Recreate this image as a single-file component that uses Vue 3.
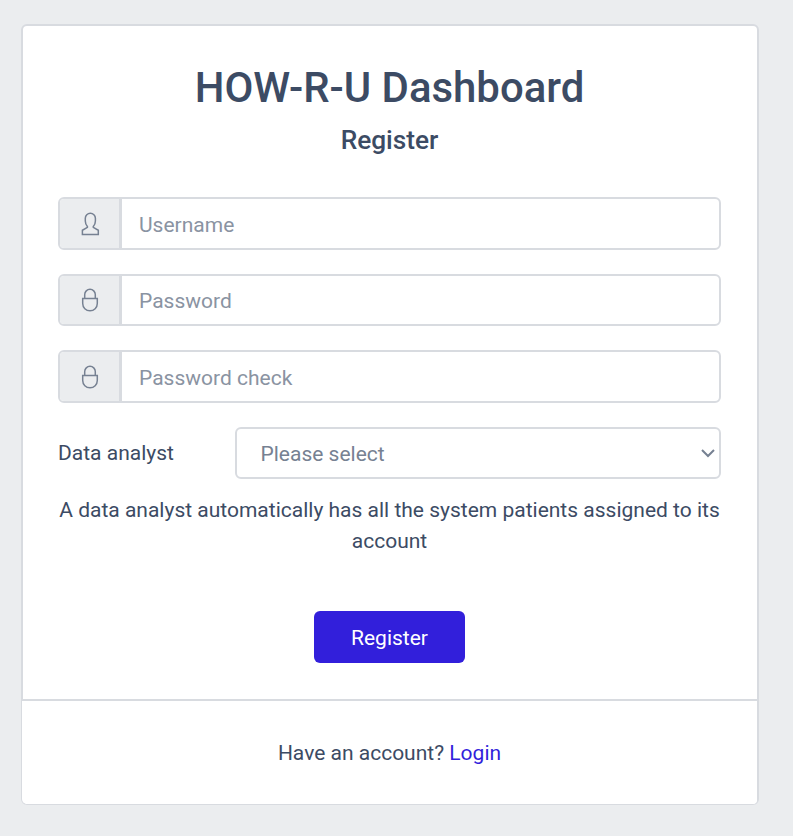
<script setup>
import { ref } from 'vue'

const fields = ref([
  { id: 'username', label: 'Username', type: 'text', icon: 'user', value: '' },
  { id: 'password', label: 'Password', type: 'password', icon: 'lock', value: '' },
  { id: 'password-check', label: 'Password check', type: 'password', icon: 'lock', value: '' },
])
</script>

<template>
  <main class="page">
    <section class="card">
      <form class="card-body" @submit.prevent>
        <h1>HOW-R-U Dashboard</h1>
        <h2>Register</h2>

        <div v-for="field in fields" :key="field.id" class="input-group" :class="field.id">
          <span class="prepend">
            <svg v-if="field.icon === 'user'" class="icon" viewBox="0 0 24 24">
              <path d="M9.400 14.400C8.300 13.200 7.300 11 7.300 9V6.300A5.050 5.050 0 0 1 17.400 6.300V9C17.400 11 16.400 13.200 15.300 14.400V15.400L20.300 18.300V22.500H4.400V18.300L9.400 15.400Z" />
            </svg>
            <svg v-else class="icon" viewBox="0 0 24 24">
              <path d="M6.700 10.500V6.600A5.300 5.300 0 0 1 17.300 6.600V10.500M4.700 10.500H19.300V15.500A7.300 7.300 0 0 1 4.700 15.500Z" />
            </svg>
          </span>
          <input v-model="field.value" :type="field.type" :placeholder="field.label" />
        </div>

        <div class="select-row">
          <label>Data analyst</label>
          <div class="select">
            <span>Please select</span>
            <svg class="chevron" viewBox="0 0 16 10"><path d="M2 2L8 8L14 2" /></svg>
          </div>
        </div>

        <p class="hint">A data analyst automatically has all the system patients assigned to its account</p>
        <button type="submit">Register</button>
      </form>
      <footer>Have an account? <a href="#">Login</a></footer>
    </section>
  </main>
</template>

<style>
body {
  background: #ebedef;
}
</style>

<style scoped>
* {
  box-sizing: border-box;
}
.page {
  height: 836px;
  padding: 24px 34px 31px 21px;
  background: #ebedef;
  color: #3c4b64;
  font: 400 21px/31.5px Roboto, sans-serif;
}
.card {
  display: flex;
  flex-direction: column;
  height: 781px;
  border: 2px solid #d8dbe0;
  border-bottom-width: 1px;
  border-radius: 6px;
  background: #fff;
}
.card-body {
  display: flex;
  flex-direction: column;
  height: 673px;
  padding: 37px 36px 0 35px;
}
h1,
h2 {
  margin: 0;
  font-weight: 500;
  text-align: center;
}
h1 {
  font-size: 41.9px;
  line-height: 50px;
}
h2 {
  margin: 11px 0 41px;
  font-size: 26.25px;
  line-height: 32px;
}
.input-group {
  display: flex;
  flex: none;
  height: 52.5px;
  margin-bottom: 24px;
  border: 2px solid #d8dbe0;
  border-radius: 6px;
  overflow: hidden;
}
.prepend {
  display: flex;
  align-items: center;
  justify-content: center;
  width: 62px;
  border-right: 3px solid #d8dbe0;
  background: #ebedef;
}
.username .prepend,
.password-check .prepend {
  padding-top: 1px;
}
.icon {
  width: 24px;
  height: 24px;
  fill: none;
  stroke: #768192;
  stroke-width: 1.5;
}
input {
  flex: 1;
  min-width: 0;
  padding: 3px 17px 0;
  border: 0;
  outline: 0;
  background: transparent;
  font: inherit;
  color: #768192;
}
.username input,
.password-check input {
  padding-top: 5px;
}
input::placeholder {
  color: #8a93a2;
  opacity: 1;
}
.select-row {
  display: flex;
  align-items: center;
  justify-content: space-between;
}
label {
  padding-top: 2px;
}
.select {
  display: flex;
  align-items: center;
  justify-content: space-between;
  width: 486px;
  height: 52px;
  padding: 0 3px 0 23.5px;
  border: 2px solid #d8dbe0;
  border-radius: 6px;
  color: #768192;
}
.select span {
  padding-top: 5px;
}
.chevron {
  width: 16px;
  height: 10px;
  fill: none;
  stroke: #768192;
  stroke-width: 2;
}
.hint {
  margin: 16px 0 53px;
  text-align: center;
}
button {
  align-self: center;
  width: 151px;
  height: 52px;
  padding: 5px 0 0;
  border: 0;
  border-radius: 6px;
  background: #321fdb;
  color: #fff;
  font: inherit;
}
footer {
  flex: 1;
  padding-top: 37px;
  border-top: 2px solid #d8dbe0;
  margin-left: -1px;
  border-radius: 0 0 4px 5px;
  background: #fff;
  text-align: center;
}
a {
  color: #321fdb;
  text-decoration: none;
}
</style>
